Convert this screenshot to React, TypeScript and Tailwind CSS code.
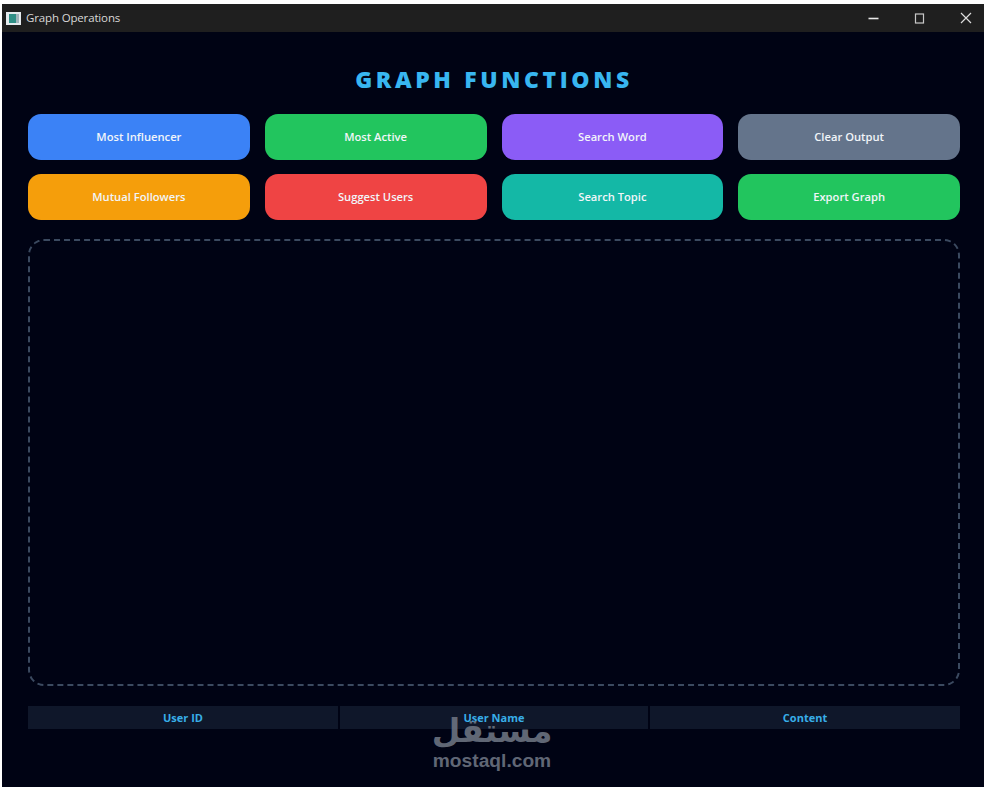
const rows = [
  [
    { label: "Most Influencer", bg: "bg-[#3b82f6]" },
    { label: "Most Active", bg: "bg-[#22c55e]" },
    { label: "Search Word", bg: "bg-[#8b5cf6]" },
    { label: "Clear Output", bg: "bg-[#64748b]" },
  ],
  [
    { label: "Mutual Followers", bg: "bg-[#f59e0b]" },
    { label: "Suggest Users", bg: "bg-[#ef4444]" },
    { label: "Search Topic", bg: "bg-[#14b8a6]" },
    { label: "Export Graph", bg: "bg-[#22c55e]" },
  ],
];

export default function App() {
  return (
    <div className="relative flex h-[787px] w-[984px] flex-col overflow-hidden bg-white pl-[2px] pt-[4px] font-['Open_Sans',sans-serif]">
      <header className="flex h-[28px] shrink-0 items-center bg-[#1f1f1f] pl-[4px] text-[#d8d8d8]">
        <svg width="15" height="13" viewBox="0 0 15 13">
          <rect width="15" height="13" fill="#e4eaed" />
          <rect x="3" y="2" width="7" height="9" fill="#2f8f86" />
          <rect x="10" y="2" width="3" height="9" fill="#9fb4bb" />
        </svg>
        <span className="ml-[5px] text-[11.5px] tracking-[-0.15px]">Graph Operations</span>
        <div className="ml-auto flex items-center gap-[35px] pr-[12px]">
          <svg width="11" height="11" viewBox="0 0 11 11"><path d="M0.5 5.5H10.5" stroke="#e8e8e8" strokeWidth="1.6" /></svg>
          <svg width="11" height="11" viewBox="0 0 11 11"><rect x="1.5" y="1" width="8" height="9" fill="none" stroke="#c8c8c8" strokeWidth="1.2" /></svg>
          <svg width="12" height="12" viewBox="0 0 12 12"><path d="M1 1L11 11M11 1L1 11" stroke="#dcdcdc" strokeWidth="1.2" /></svg>
        </div>
      </header>

      <main className="flex flex-1 flex-col bg-[#000314] pl-[26px] pr-[24px]">
        <h1 className="mt-[31px] h-[36px] text-center text-[23px] leading-[32px] font-black tracking-[3.6px] text-[#38b6f0]">
          GRAPH FUNCTIONS
        </h1>
        <div className="mt-[15px] flex flex-col gap-[14px]">
          {rows.map((row, i) => (
            <div key={i} className="grid grid-cols-4 gap-[15px]">
              {row.map((b) => (
                <button key={b.label} className={`h-[46px] rounded-[13px] text-[11.2px] font-semibold text-[#f1f5f9] ${b.bg}`}>
                  {b.label}
                </button>
              ))}
            </div>
          ))}
        </div>
        <div className="mt-[19px] h-[447px] rounded-[16px] border-2 border-dashed border-[#3b4a60]" />
        <div className="mt-[20px] grid h-[23px] grid-cols-[310px_1fr_310px] gap-[2px]">
          {["User ID", "User Name", "Content"].map((h) => (
            <div key={h} className="flex items-center justify-center bg-[#0f172a] pt-[1px] text-[11px] font-bold text-[#38aee8]">
              {h}
            </div>
          ))}
        </div>
      </main>

      <div className="pointer-events-none absolute left-[422px] top-[711px] flex w-[140px] flex-col items-center text-[#6b7280] opacity-90">
        <span className="font-['DejaVu_Sans',sans-serif] text-[33px] leading-[40px] font-bold">مستقل</span>
        <span className="font-['Liberation_Sans',sans-serif] text-[19.2px] leading-[20px] font-bold">mostaql.com</span>
      </div>
    </div>
  );
}
